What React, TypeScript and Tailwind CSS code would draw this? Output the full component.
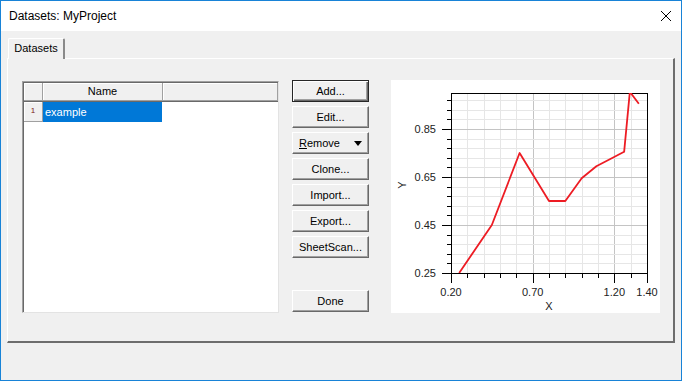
import clsx from "clsx";

const font = { fontFamily: '"Liberation Sans", Arial, sans-serif' };

const X0 = 60;
const X1 = 256;
const Y0 = 13;
const Y1 = 193;
const sx = (v: number) => X0 + ((v - 0.2) * (X1 - X0)) / 1.2;
const sy = (v: number) => Y1 - ((v - 0.25) * (Y1 - Y0)) / 0.75;
const px = (n: number) => Math.round(n) + 0.5;

const points: [number, number][] = [
  [0.25, 0.25],
  [0.45, 0.45],
  [0.62, 0.75],
  [0.8, 0.55],
  [0.9, 0.55],
  [1.0, 0.645],
  [1.09, 0.695],
  [1.19, 0.73],
  [1.26, 0.755],
  [1.295, 1.005],
  [1.35, 0.955],
];

function Chart() {
  const xs = Array.from({ length: 11 }, (_, i) => 0.3 + i * 0.1);
  const ys = Array.from({ length: 18 }, (_, i) => 0.29 + i * 0.04);
  const isMajorX = (v: number) => [0.2, 0.7, 1.2, 1.4].some((m) => Math.abs(m - v) < 0.01);
  const isMajorY = (v: number) => [0.25, 0.45, 0.65, 0.85].some((m) => Math.abs(m - v) < 0.01);

  return (
    <svg width="269" height="233" className="block" style={font}>
      <defs>
        <clipPath id="plot">
          <rect x={X0} y={Y0} width={X1 - X0} height={Y1 - Y0} />
        </clipPath>
      </defs>
      <g shapeRendering="crispEdges">
        {xs.map((v) => (
          <line key={"gx" + v} x1={px(sx(v))} x2={px(sx(v))} y1={Y0} y2={Y1} stroke={isMajorX(v) ? "#c4c4c4" : "#e6e6e6"} />
        ))}
        {ys.map((v) => (
          <line key={"gy" + v} y1={px(sy(v))} y2={px(sy(v))} x1={X0} x2={X1} stroke={isMajorY(v) ? "#c4c4c4" : "#e6e6e6"} />
        ))}
        {[0.2, ...xs, 1.4].map((v) => (
          <line key={"tx" + v} x1={px(sx(v))} x2={px(sx(v))} y1={Y1} y2={Y1 + (isMajorX(v) ? 10 : 5)} stroke="#000" />
        ))}
        {[0.25, ...ys].map((v) => (
          <line key={"ty" + v} y1={px(sy(v))} y2={px(sy(v))} x1={X0} x2={X0 - (isMajorY(v) ? 9 : 4)} stroke="#000" />
        ))}
        <rect x={X0 + 0.5} y={Y0 + 0.5} width={X1 - X0} height={Y1 - Y0} fill="none" stroke="#000" />
      </g>
      <polyline
        clipPath="url(#plot)"
        points={points.map(([x, y]) => `${sx(x)},${sy(y)}`).join(" ")}
        fill="none"
        stroke="#ed1c24"
        strokeWidth="1.8"
        strokeLinejoin="round"
      />
      {[
        ["0.20", 0.2],
        ["0.70", 0.7],
        ["1.20", 1.2],
        ["1.40", 1.4],
      ].map(([t, v]) => (
        <text key={t as string} x={sx(v as number)} y={216} fontSize="11" textAnchor="middle" fill="#222">
          {t}
        </text>
      ))}
      {[
        ["0.25", 0.25],
        ["0.45", 0.45],
        ["0.65", 0.65],
        ["0.85", 0.85],
      ].map(([t, v]) => (
        <text key={t as string} x={45} y={sy(v as number) + 4} fontSize="11" textAnchor="end" fill="#222">
          {t}
        </text>
      ))}
      <text x={158} y={230} fontSize="11" textAnchor="middle" fill="#222">
        X
      </text>
      <text x={15} y={105} fontSize="11" textAnchor="middle" fill="#222" transform="rotate(-90 15 105)">
        Y
      </text>
    </svg>
  );
}

function Btn({
  children,
  def,
  split,
  className,
}: {
  children: React.ReactNode;
  def?: boolean;
  split?: boolean;
  className?: string;
}) {
  return (
    <div
      className={clsx(
        "flex h-[22px] w-[77px] items-center bg-[#f0f0f0] text-[11px] text-black",
        split ? "justify-between pl-[6px] pr-[6px]" : "justify-center",
        def
          ? "border border-[#262626] shadow-[inset_1px_1px_0_#fff,inset_-1px_-1px_0_#696969,inset_-2px_-2px_0_#a0a0a0]"
          : "border border-t-white border-l-white border-b-[#696969] border-r-[#696969] shadow-[inset_-1px_-1px_0_#a0a0a0]",
        className
      )}
    >
      {children}
    </div>
  );
}

const headCell =
  "flex items-center justify-center bg-[#f0f0f0] border-r border-b border-r-[#a0a0a0] border-b-[#a0a0a0] shadow-[inset_1px_1px_0_#fff]";

export default function App() {
  return (
    <div className="flex h-[381px] w-[682px] flex-col border border-[#1883d7] bg-[#f0f0f0]" style={font}>
      <div className="flex h-[30px] shrink-0 items-center justify-between bg-white pl-[8px] pr-[9px]">
        <span className="text-[12px] text-black">Datasets: MyProject</span>
        <svg width="12" height="12" viewBox="0 0 12 12">
          <path d="M1 1L11 11M11 1L1 11" stroke="#000" strokeWidth="1" />
        </svg>
      </div>

      <div className="flex flex-1 flex-col px-[6px] pt-[7px]">
        <div className="relative z-10 -mb-px ml-[1px] flex h-[21px] w-[57px] items-center justify-center rounded-t-[2px] border-l border-t border-r-2 border-l-white border-t-white border-r-[#8a8a8a] bg-[#f0f0f0] pb-[2px] text-[11px] text-black">
          Datasets
        </div>
        <div className="flex h-[285px] items-start border border-r-2 border-b-2 border-l-white border-t-white border-r-[#6d6d6d] border-b-[#6d6d6d] pl-[14px] pt-[21px]">
          {/* grid */}
          <div className="mt-[1px] h-[232px] w-[257px] border border-t-[#a0a0a0] border-l-[#a0a0a0] border-r-[#e3e3e3] border-b-[#e3e3e3]">
            <div className="h-full w-full border-t border-l border-t-[#696969] border-l-[#696969] bg-white">
              <div className="flex h-[19px] border-b border-b-[#696969]">
                <div className={clsx(headCell, "w-[19px]")} />
                <div className={clsx(headCell, "w-[120px] text-[11px] text-black")}>Name</div>
                <div className={clsx(headCell, "flex-1")} />
              </div>
              <div className="flex h-[20px]">
                <div className={clsx(headCell, "w-[19px] items-start pt-[3px] text-[8px] text-[#7a1515]")}>1</div>
                <div className="flex w-[119px] items-center bg-[#0078d7] pl-[2px] text-[11px] text-white">example</div>
              </div>
            </div>
          </div>

          {/* buttons */}
          <div className="ml-[13px] flex h-[232px] flex-col gap-[4px]">
            <Btn def>Add...</Btn>
            <Btn>Edit...</Btn>
            <Btn split>
              <span>
                <span className="underline">R</span>emove
              </span>
              <svg width="8" height="5" viewBox="0 0 8 5">
                <path d="M0 0H8L4 5Z" fill="#000" />
              </svg>
            </Btn>
            <Btn>Clone...</Btn>
            <Btn>Import...</Btn>
            <Btn>Export...</Btn>
            <Btn>SheetScan...</Btn>
            <Btn className="mt-auto">Done</Btn>
          </div>

          {/* chart */}
          <div className="ml-[22px] bg-white">
            <Chart />
          </div>
        </div>
      </div>
    </div>
  );
}
